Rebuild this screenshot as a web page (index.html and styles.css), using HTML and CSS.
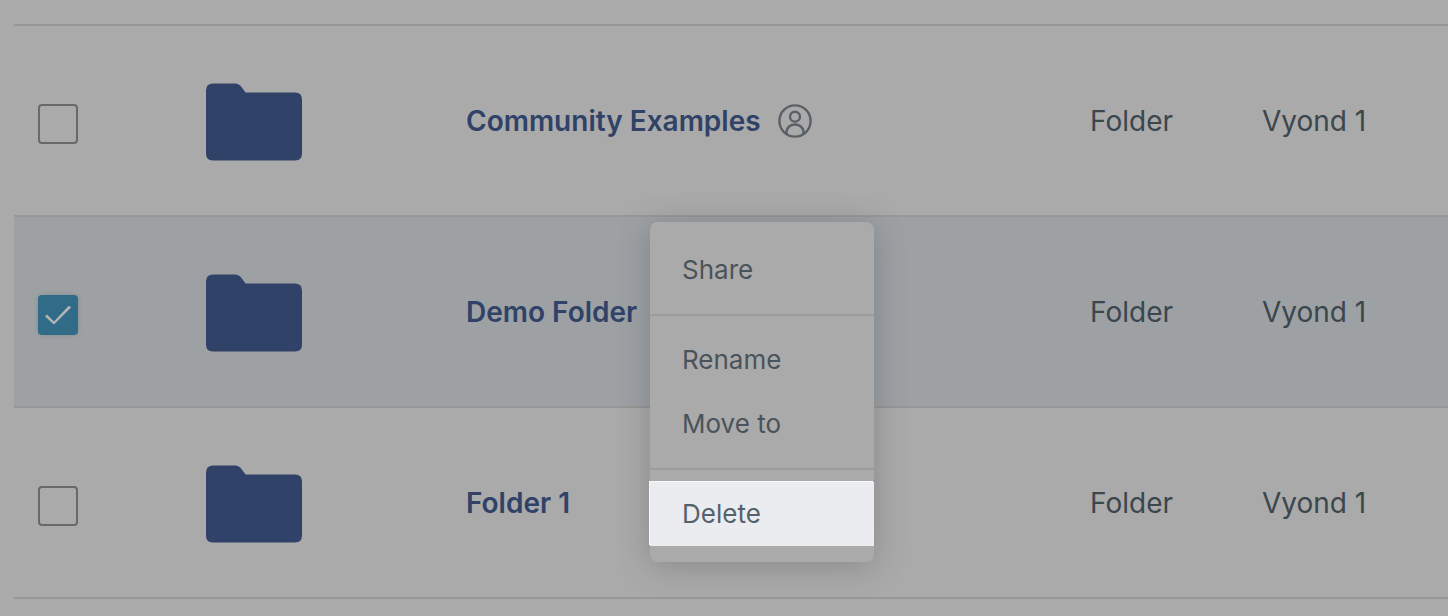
FILE: index.html
```html
<!DOCTYPE html>
<html lang="en">
<head>
<meta charset="utf-8">
<meta name="viewport" content="width=device-width, initial-scale=1">
<title>Folders</title>
<link rel="stylesheet" href="styles.css">
</head>
<body>
<svg class="defs" aria-hidden="true">
  <symbol id="folder" viewBox="0 0 96 78">
    <path d="M7 .5H29Q33 .5 35.500 4L39.500 9.500H89Q96 9.500 96 16.500V70.500Q96 77.500 89 77.500H7Q0 77.500 0 70.500V7.500Q0 .5 7 .5Z"/>
  </symbol>
</svg>
<main class="library">
  <table class="files">
    <colgroup>
      <col class="col-check"><col class="col-thumb"><col class="col-name"><col class="col-type"><col class="col-owner">
    </colgroup>
    <tbody>
      <tr class="row">
        <td><input class="check" type="checkbox" aria-label="Select Community Examples"></td>
        <td><svg class="folder"><use href="#folder"/></svg></td>
        <td>
          <div class="title">
            <a class="name" href="#">Community Examples</a>
            <svg class="person" viewBox="0 0 34 34" role="img" aria-label="Shared">
              <circle cx="17" cy="17" r="15.600"/>
              <circle cx="17" cy="12.700" r="5"/>
              <path d="M8.500 30V28.500C8.500 17.800 25.500 17.800 25.500 28.500V30"/>
            </svg>
          </div>
        </td>
        <td>Folder</td>
        <td>Vyond 1</td>
      </tr>
      <tr class="row selected">
        <td><input class="check" type="checkbox" checked aria-label="Select Demo Folder"></td>
        <td><svg class="folder"><use href="#folder"/></svg></td>
        <td><a class="name" href="#">Demo Folder</a></td>
        <td>Folder</td>
        <td>Vyond 1</td>
      </tr>
      <tr class="row">
        <td><input class="check" type="checkbox" aria-label="Select Folder 1"></td>
        <td><svg class="folder"><use href="#folder"/></svg></td>
        <td><a class="name" href="#">Folder 1</a></td>
        <td>Folder</td>
        <td>Vyond 1</td>
      </tr>
    </tbody>
  </table>
  <div class="menu" role="menu">
    <button class="item" role="menuitem">Share</button>
    <hr class="divider">
    <button class="item" role="menuitem">Rename</button>
    <button class="item" role="menuitem">Move to</button>
    <hr class="divider">
    <button class="item active" role="menuitem">Delete</button>
  </div>
</main>
</body>
</html>
```
FILE: styles.css
```css
* { box-sizing: border-box; }
body {
  margin: 0;
  background: #aaaaaa;
  color: #3b464d;
  font-family: Inter, "Liberation Sans", sans-serif;
  font-size: 28px;
  line-height: 36px;
}
.defs { position: absolute; width: 0; height: 0; }
.library { position: relative; padding: 24px 0 16px 14px; }
.files {
  width: 100%;
  table-layout: fixed;
  border-collapse: separate;
  border-spacing: 0;
  border-bottom: 2px solid #979797;
}
.col-check { width: 168px; }
.col-thumb { width: 260px; }
.col-type { width: 172px; }
.col-owner { width: 210px; }
.row td {
  height: 191px;
  padding: 0 0 0 24px;
  border-top: 2px solid #979797;
  vertical-align: middle;
  white-space: nowrap;
}
.selected td { background: #9da1a4; }
.check {
  display: block;
  appearance: none;
  width: 40px;
  height: 40px;
  margin: 6px 0 0;
  border: 2px solid #686868;
  border-radius: 4px;
}
.check:checked {
  border: 0;
  background: #306c87;
  box-shadow: 0 0 4px #858b90;
}
.check:checked::before {
  content: "";
  display: block;
  width: 26px;
  height: 20px;
  margin: 11px 7px;
  background: #b5b5b5;
  clip-path: polygon(0 11px, 2px 9px, 9px 16px, 24px 0, 26px 2px, 9px 19px);
}
.folder {
  display: block;
  width: 96px;
  height: 78px;
  margin-top: 2px;
  fill: #304267;
}
.title { display: flex; align-items: center; gap: 17px; }
.name { color: #304267; font-weight: 600; text-decoration: none; }
.person {
  width: 34px;
  height: 34px;
  fill: none;
  stroke: #5a6065;
  stroke-width: 2.400;
}
.menu {
  position: absolute;
  top: 222px;
  left: 650px;
  width: 224px;
  padding: 16px 0;
  border-radius: 8px;
  background: #aaaaaa;
  box-shadow: 0 4px 32px rgba(60, 60, 65, 0.3);
}
.item {
  display: block;
  width: 100%;
  height: 64px;
  padding: 0 32px;
  border: 0;
  border-radius: 0;
  background: none;
  color: #4a535a;
  font: inherit;
  font-size: 26px;
  text-align: left;
}
.item.active {
  background: #ebecf0;
  color: #55626c;
  box-shadow: -1px -1px 0 #f8f8fa;
}
.divider { height: 2px; margin: 12px 0; border: 0; background: #9c9c9c; }
```
